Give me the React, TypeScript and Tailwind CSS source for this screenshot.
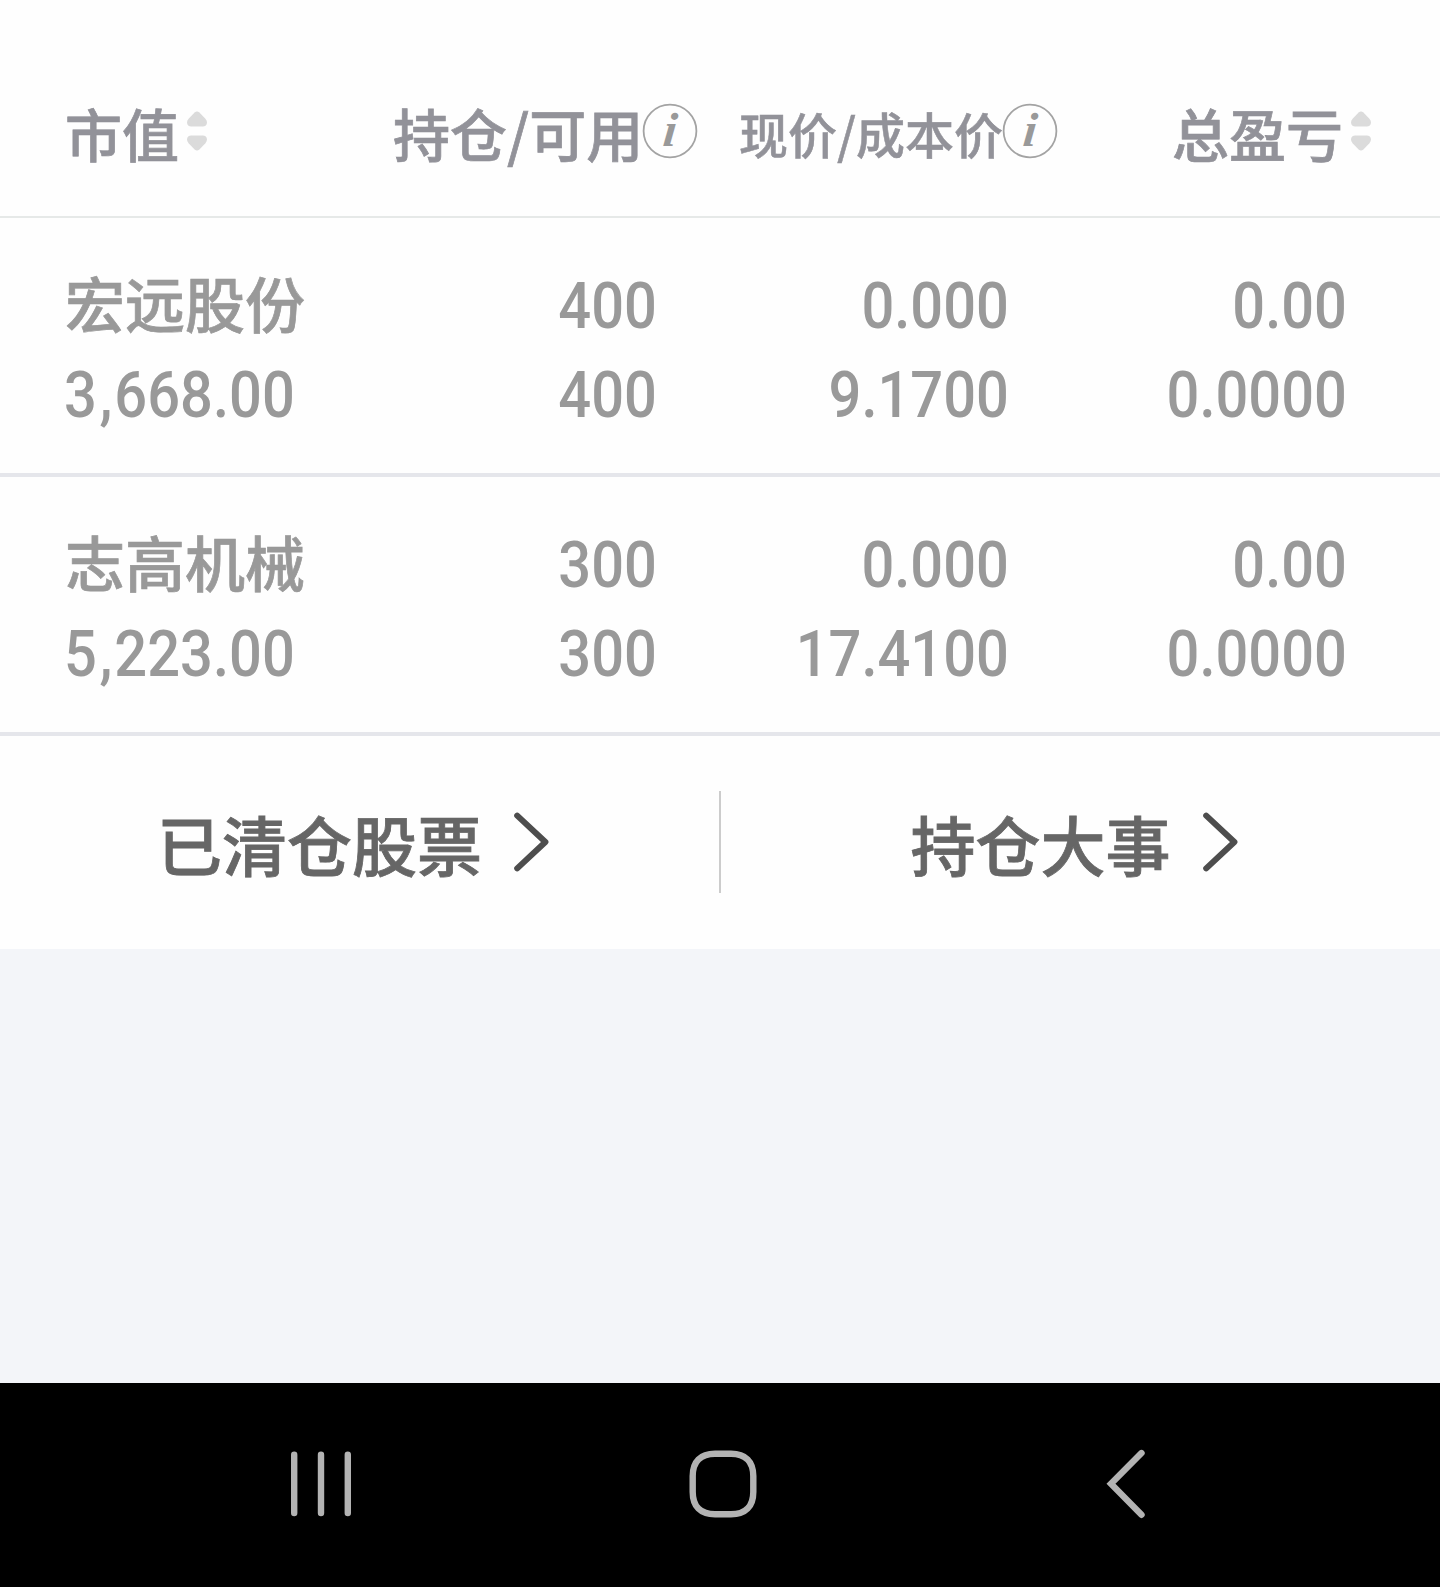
import React from 'react';

interface Holding {
  name: string;
  marketValue: string;
  position: string;
  available: string;
  price: string;
  cost: string;
  profit: string;
  profitRate: string;
}

const holdings: Holding[] = [
  {
    name: '宏远股份',
    marketValue: '3,668.00',
    position: '400',
    available: '400',
    price: '0.000',
    cost: '9.1700',
    profit: '0.00',
    profitRate: '0.0000',
  },
  {
    name: '志高机械',
    marketValue: '5,223.00',
    position: '300',
    available: '300',
    price: '0.000',
    cost: '17.4100',
    profit: '0.00',
    profitRate: '0.0000',
  },
];

const SortIcon: React.FC = () => (
  <svg className="h-10 w-5 shrink-0" viewBox="0 0 20 40" fill="#dbdbdb">
    <path d="M7.6 1.6Q10 -0.6 12.4 1.6L18.4 7.8Q20 9.6 20 11.4Q19.8 15.4 15.6 15.4H4.4Q0.2 15.4 0 11.4Q0 9.6 1.6 7.8Z" />
    <path d="M7.6 38.4Q10 40.6 12.4 38.4L18.4 32.2Q20 30.4 20 28.6Q19.8 24.6 15.6 24.6H4.4Q0.2 24.6 0 28.6Q0 30.4 1.6 32.2Z" />
  </svg>
);

const InfoIcon: React.FC = () => (
  <svg className="-ml-px h-14 w-14 shrink-0" viewBox="0 0 56 56">
    <circle cx="28" cy="28" r="26.4" fill="none" stroke="#a3a3a3" strokeWidth="1.8" />
    <text
      x="20"
      y="43.5"
      fill="#999999"
      transform="translate(4.5 0) skewX(-6)"
      className="font-['Liberation_Serif',serif] text-[48px] font-bold italic"
    >
      i
    </text>
  </svg>
);

const ArrowIcon: React.FC = () => (
  <svg className="h-[60px] w-9 shrink-0" viewBox="0 0 36 60" fill="none">
    <path d="M3.2 3.6L31.4 30L3.2 56.4" stroke="#4d4d4d" strokeWidth="6" strokeLinecap="round" strokeLinejoin="round" />
  </svg>
);

// The comma gets the same advance as the decimal point
const Num: React.FC<{ value: string; left?: boolean }> = ({ value, left }) => (
  <span
    className={`block h-[89px] scale-x-[0.89] font-['Roboto',sans-serif] text-[65px] font-medium leading-[92px] ${
      left ? 'origin-left' : 'origin-right text-right'
    }`}
  >
    {value.split(/([.,])/).map((part, i) => {
      if (part === ',') return <span key={i} className="ml-[3px] mr-0.5">,</span>;
      return part;
    })}
  </span>
);

const HoldingRow: React.FC<{ item: Holding }> = ({ item }) => (
  <div className="grid h-[259px] grid-cols-[300px_293px_352px_338px] border-b-4 border-[#e5e6eb] pl-16 pt-[42px] text-[#999999]">
    <div>
      <div className="h-[89px] pl-px text-[60px] font-medium leading-[83px] [-webkit-text-stroke:0.7px]">{item.name}</div>
      <Num value={item.marketValue} left />
    </div>
    <div>
      <Num value={item.position} />
      <Num value={item.available} />
    </div>
    <div>
      <Num value={item.price} />
      <Num value={item.cost} />
    </div>
    <div>
      <Num value={item.profit} />
      <Num value={item.profitRate} />
    </div>
  </div>
);

const App: React.FC = () => {
  return (
    <div className="flex h-[1587px] w-[1440px] flex-col overflow-hidden bg-[#f3f5f9] font-['Noto_Sans_CJK_SC',sans-serif]">
      <main className="bg-[#fefefe]">
        <header className="grid h-[218px] grid-cols-[328px_346px_433px_1fr] border-b-2 border-[#e6e9e8] pl-[65px] pt-[91px] text-[57px] font-medium leading-[90px] text-[#929299]">
          <div className="flex h-20 items-center">
            <span className="mr-2 mt-0.5 [-webkit-text-stroke:0.7px]">市值</span>
            <SortIcon />
          </div>
          <div className="flex h-20 items-center">
            <span className="mt-0.5 [-webkit-text-stroke:0.7px]">持仓/可用</span>
            <InfoIcon />
          </div>
          <div className="flex h-20 items-center">
            <span className="mt-1 text-[49px] [-webkit-text-stroke:0.5px]">现价/成本价</span>
            <InfoIcon />
          </div>
          <div className="flex h-20 items-center">
            <span className="mr-2 mt-0.5 [-webkit-text-stroke:0.7px]">总盈亏</span>
            <SortIcon />
          </div>
        </header>

        {holdings.map((item) => (
          <HoldingRow key={item.name} item={item} />
        ))}

        <div className="flex h-[213px] items-center pb-0.5 text-[65px] font-medium text-[#666666]">
          <button className="flex flex-1 items-center justify-center gap-8 pr-3">
            <span className="mt-0.5 leading-[90px] [-webkit-text-stroke:0.8px]">已清仓股票</span>
            <ArrowIcon />
          </button>
          <div className="h-[102px] w-0.5 bg-[#cccccc]" />
          <button className="flex flex-1 items-center justify-center gap-8 pr-3">
            <span className="mt-0.5 leading-[90px] [-webkit-text-stroke:0.8px]">持仓大事</span>
            <ArrowIcon />
          </button>
        </div>
      </main>

      <nav className="mt-auto flex h-[204px] items-start bg-black pl-[291px] pt-[66px]">
        <svg className="h-[70px] w-[60px]" viewBox="0 0 60 70" stroke="#b3b3b3" strokeWidth="6.4" strokeLinecap="round">
          <path d="M3.2 5.8V64M30 5.8V64M56.8 5.8V64" />
        </svg>
        <svg className="ml-[338px] h-[70px] w-[68px]" viewBox="0 0 68 70" fill="none" stroke="#b3b3b3" strokeWidth="6.4">
          <path d="M26 4.7H42C56.5 4.7 64.3 12.5 64.3 27V43C64.3 57.5 56.5 65.3 42 65.3H26C11.5 65.3 3.7 57.5 3.7 43V27C3.7 12.5 11.5 4.7 26 4.7Z" />
        </svg>
        <svg className="ml-[349px] h-[70px] w-10" viewBox="0 0 40 70" fill="none" stroke="#b3b3b3" strokeWidth="6.4" strokeLinecap="round">
          <path d="M35.5 4.1L5 34.8L35.5 65.8" />
        </svg>
      </nav>
    </div>
  );
};

export default App;
